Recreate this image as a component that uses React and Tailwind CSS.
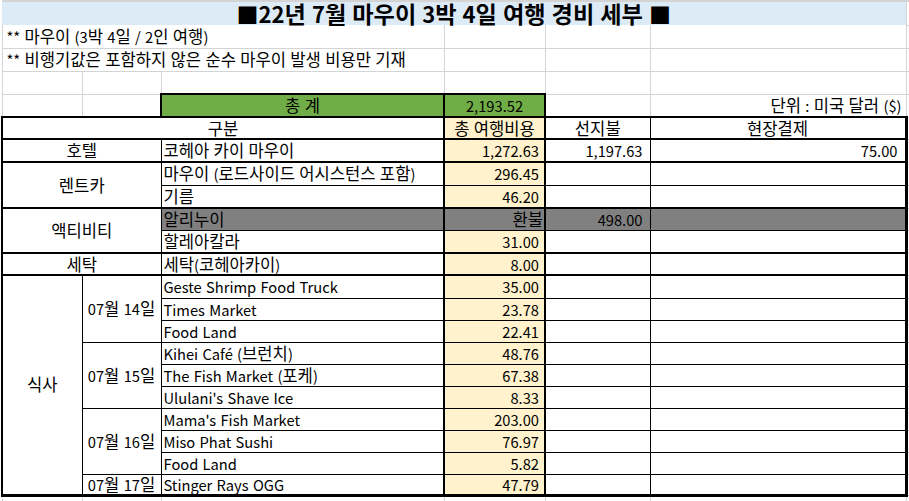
import React from "react";

const G = "border border-[#D4D4D4] p-0";
const B = "border border-black p-0";

function K({ t, big }) {
  if (!t) return null;
  const parts = String(t).split(/([\uAC00-\uD7A3]+)/);
  return parts.map((p, i) =>
    /[\uAC00-\uD7A3]/.test(p) ? (
      <span key={i} className={big ? "text-[23.2px] leading-[23px]" : "text-[16.6px] leading-[17px]"}>
        {p}
      </span>
    ) : (
      <React.Fragment key={i}>{p}</React.Fragment>
    )
  );
}

function Gray({ children, className = "", ...rest }) {
  return (
    <td className={`${G} ${className}`} {...rest}>
      {children}
    </td>
  );
}

const rows = [
  { h: "h-[23px]", top: true, a: { text: "호텔", colSpan: 2 }, c: "코헤아 카이 마우이", d: "1,272.63", e: "1,197.63", f: "75.00" },
  { h: "h-[23px]", top: true, a: { text: "렌트카", colSpan: 2, rowSpan: 2 }, c: "마우이 (로드사이드 어시스턴스 포함)", d: "296.45" },
  { h: "h-[23px]", c: "기름", d: "46.20" },
  { h: "h-[22px]", top: true, a: { text: "액티비티", colSpan: 2, rowSpan: 2 }, c: "알리누이", d: "환불", dText: true, e: "498.00", gray: true },
  { h: "h-[23px]", c: "할레아칼라", d: "31.00" },
  { h: "h-[22px]", top: true, a: { text: "세탁", colSpan: 2 }, c: "세탁(코헤아카이)", d: "8.00" },
  { h: "h-[23px]", top: true, a: { text: "식사", rowSpan: 10, meal: true }, b: { text: "07월 14일", rowSpan: 3 }, c: "Geste Shrimp Food Truck", d: "35.00" },
  { h: "h-[22px]", c: "Times Market", d: "23.78" },
  { h: "h-[22px]", c: "Food Land", d: "22.41" },
  { h: "h-[22px]", b: { text: "07월 15일", rowSpan: 3 }, c: "Kihei Café (브런치)", d: "48.76" },
  { h: "h-[22px]", c: "The Fish Market (포케)", d: "67.38" },
  { h: "h-[22px]", c: "Ululani's Shave Ice", d: "8.33" },
  { h: "h-[22px]", b: { text: "07월 16일", rowSpan: 3 }, c: "Mama's Fish Market", d: "203.00" },
  { h: "h-[22px]", c: "Miso Phat Sushi", d: "76.97" },
  { h: "h-[22px]", c: "Food Land", d: "5.82" },
  { h: "h-[21px]", last: true, b: { text: "07월 17일", rowSpan: 1 }, c: "Stinger Rays OGG", d: "47.79" },
];

export default function App() {
  return (
    <div className="w-[909px] h-[501px] overflow-hidden bg-white pl-[1px] text-black font-['Noto_Sans_CJK_KR',sans-serif] text-[14.7px] leading-[17px] [word-spacing:1px]">
      <table className="table-fixed border-collapse w-[908px]">
        <colgroup>
          <col className="w-[80px]" />
          <col className="w-[79px]" />
          <col className="w-[283px]" />
          <col className="w-[101px]" />
          <col className="w-[105px]" />
          <col className="w-[256px]" />
          <col className="w-[4px]" />
        </colgroup>
        <tbody>
          <tr className="h-[1px]">
            <Gray />
            <Gray />
            <Gray />
            <Gray />
            <Gray />
            <Gray />
            <Gray />
          </tr>
          <tr className="h-[23px]">
            <td colSpan={6} className="border-0 p-0 bg-[#DDEBF7] text-center font-bold text-[22px] leading-[23px] whitespace-nowrap">
              <K t="■22년 7월 마우이 3박 4일 여행 경비 세부 ■" big />
            </td>
            <Gray className="border-t-0" />
          </tr>
          <tr className="h-[23px]">
            <Gray colSpan={3} className="border-t-0 pl-[4px] text-left whitespace-nowrap">
              <K t="** 마우이 (3박 4일 / 2인 여행)" />
            </Gray>
            <Gray className="border-t-0" />
            <Gray className="border-t-0" />
            <Gray className="border-t-0" />
            <Gray className="border-t-0" />
          </tr>
          <tr className="h-[23px]">
            <Gray colSpan={3} className="pl-[4px] text-left whitespace-nowrap">
              <K t="** 비행기값은 포함하지 않은 순수 마우이 발생 비용만 기재" />
            </Gray>
            <Gray />
            <Gray />
            <Gray />
            <Gray />
          </tr>
          <tr className="h-[23px]">
            <Gray />
            <Gray />
            <Gray />
            <Gray />
            <Gray />
            <Gray />
            <Gray />
          </tr>
          <tr className="h-[23px]">
            <Gray />
            <Gray />
            <td className={`${B} border-2 bg-[#70AD47] text-center`}>
              <K t="총 계" />
            </td>
            <td className={`${B} border-2 bg-[#70AD47] text-center`}>2,193.52</td>
            <Gray />
            <Gray className="text-right pr-[4px] whitespace-nowrap">
              <K t="단위 : 미국 달러 ($)" />
            </Gray>
            <Gray />
          </tr>
          <tr className="h-[22px]">
            <td colSpan={3} className={`${B} border-t-2 border-b-2 border-l-2 text-center`}>
              <K t="구분" />
            </td>
            <td className={`${B} border-2 bg-[#FFF2CC] text-center whitespace-nowrap`}>
              <K t="총 여행비용" />
            </td>
            <td className={`${B} border-t-2 border-b-2 text-center`}>
              <K t="선지불" />
            </td>
            <td className={`${B} border-t-2 border-b-2 border-r-[3px] text-center`}>
              <K t="현장결제" />
            </td>
            <Gray />
          </tr>
          {rows.map((r, i) => {
            const t = r.top ? "border-t-2" : "";
            const bt = r.last ? "border-b-[3px]" : "";
            const grayBg = r.gray ? "bg-[#808080]" : "";
            return (
              <tr key={i} className={r.h}>
                {r.a && (
                  <td
                    colSpan={r.a.colSpan || 1}
                    rowSpan={r.a.rowSpan || 1}
                    className={`${B} border-t-2 border-l-2 text-center ${r.a.meal ? "border-b-[3px]" : "border-b-2"}`}
                  >
                    <K t={r.a.text} />
                  </td>
                )}
                {r.b && (
                  <td rowSpan={r.b.rowSpan} className={`${B} ${t} ${bt} text-center whitespace-nowrap`}>
                    <K t={r.b.text} />
                  </td>
                )}
                <td className={`${B} ${t} ${bt} ${grayBg} pl-[2px] text-left whitespace-nowrap`}>
                  <K t={r.c} />
                </td>
                <td
                  className={`${B} ${t} ${bt} border-x-2 ${r.gray ? "bg-[#808080]" : "bg-[#FFF2CC]"} text-right ${r.dText ? "pr-[1px]" : "pr-[5px]"}`}
                >
                  <K t={r.d} />
                </td>
                <td className={`${B} ${t} ${bt} ${grayBg} text-right pr-[7px]`}>{r.e || ""}</td>
                <td className={`${B} ${t} ${bt} ${grayBg} border-r-[3px] text-right pr-[7px]`}>{r.f || ""}</td>
                <Gray />
              </tr>
            );
          })}
          <tr className="h-[22px]">
            <Gray />
            <Gray />
            <Gray />
            <Gray />
            <Gray />
            <Gray />
            <Gray />
          </tr>
        </tbody>
      </table>
    </div>
  );
}
